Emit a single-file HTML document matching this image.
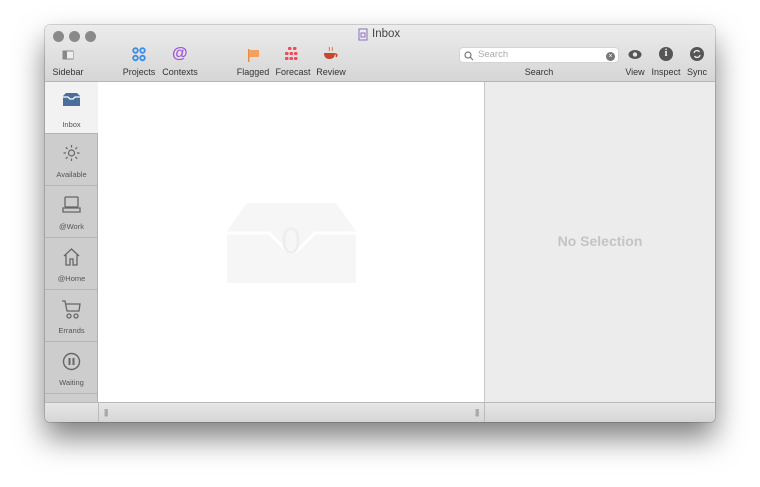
<!DOCTYPE html>
<html><head><meta charset="utf-8"><style>
*{margin:0;padding:0;box-sizing:border-box}
body{width:760px;height:487px;background:#fff;font-family:"Liberation Sans",sans-serif;position:relative;overflow:hidden}
.win{position:absolute;left:45px;top:25px;width:670px;height:397px;border-radius:5px;background:#fff;box-shadow:0 16px 30px rgba(0,0,0,.5),0 0 0 1px rgba(0,0,0,.15);overflow:hidden}
.tb{position:absolute;left:0;top:0;width:670px;height:57px;background:linear-gradient(#ececec,#d6d6d6);border-bottom:1px solid #b4b4b4}
.dot{position:absolute;top:6px;width:11px;height:11px;border-radius:50%;background:#8a8a8a}
.lbl{position:absolute;top:42px;font-size:9px;color:#333;transform:translateX(-50%);white-space:nowrap}
.ic{position:absolute}
.side{position:absolute;left:0;top:57px;width:53px;height:320px;background:#cdcdcd;border-right:1px solid #b0b0b0}
.si{position:absolute;left:0;width:53px;height:52px;border-bottom:1px solid #b5b5b5;text-align:center;font-size:7.5px;color:#555}
.si span{position:absolute;left:0;right:0;top:36px}
.si svg{position:absolute;left:17px;top:10px}
.right{position:absolute;left:439px;top:57px;width:231px;height:320px;background:#ececec;border-left:1px solid #c8c8c8}
.bot{position:absolute;left:0;top:377px;width:670px;height:20px;background:linear-gradient(#e6e6e6,#d6d6d6);border-top:1px solid #b9b9b9}
</style></head><body>
<div class="win">
<div class="tb">
<div class="dot" style="left:8px"></div><div class="dot" style="left:24px"></div><div class="dot" style="left:40px"></div>
<svg class="ic" style="left:313px;top:3px" width="10" height="13"><rect x="1" y="1" width="8" height="11" fill="#eee" stroke="#8a6fc0"/><rect x="3" y="5" width="4" height="4" fill="none" stroke="#8a6fc0"/></svg>
<div style="position:absolute;left:327px;top:3px;font-size:11.5px;color:#444">Inbox</div>
<svg class="ic" style="left:17px;top:25px" width="12" height="10"><rect x="0.5" y="0.5" width="11" height="9" fill="#888"/><rect x="5" y="1.5" width="6" height="7" fill="#eee"/></svg>
<div class="lbl" style="left:23px">Sidebar</div>
<svg class="ic" style="left:87px;top:22px" width="14" height="15" fill="none" stroke="#3a8ee8" stroke-width="1.8"><circle cx="3.5" cy="3.5" r="2.3"/><circle cx="10.5" cy="3.5" r="2.3"/><circle cx="3.5" cy="11" r="2.3"/><circle cx="10.5" cy="11" r="2.3"/></svg>
<div class="lbl" style="left:94px">Projects</div>
<div class="ic" style="left:127px;top:20px;font-size:16px;color:#a050e0;font-weight:bold">@</div>
<div class="lbl" style="left:135px">Contexts</div>
<svg class="ic" style="left:202px;top:24px" width="13" height="13"><rect x="1" y="0" width="1.5" height="13" fill="#f08a40"/><rect x="2" y="1" width="10" height="7" fill="#f4a060"/></svg>
<div class="lbl" style="left:208px">Flagged</div>
<svg class="ic" style="left:240px;top:22px" width="15" height="14" fill="#f04a5a"><rect x="3" y="0" width="3.5" height="3" rx="1"/><rect x="8" y="0" width="3.5" height="3" rx="1"/><rect x="0" y="5" width="3.5" height="3" rx="1"/><rect x="4.5" y="5" width="3.5" height="3" rx="1"/><rect x="9" y="5" width="3.5" height="3" rx="1"/><rect x="0" y="10" width="3.5" height="3" rx="1"/><rect x="4.5" y="10" width="3.5" height="3" rx="1"/><rect x="9" y="10" width="3.5" height="3" rx="1"/></svg>
<div class="lbl" style="left:248px">Forecast</div>
<svg class="ic" style="left:278px;top:21px" width="16" height="15"><path d="M6 1q1 2 0 4M9 1q1 2 0 4" stroke="#e08050" fill="none"/><path d="M1 7h11q0 6-5.5 6T1 7z" fill="#c8462c"/><path d="M12 8q3 0 1 3" stroke="#c8462c" fill="none" stroke-width="1.5"/></svg>
<div class="lbl" style="left:286px">Review</div>
<div style="position:absolute;left:414px;top:22px;width:160px;height:16px;background:#fff;border-radius:4px;border:1px solid #d4d4d4"></div>
<svg class="ic" style="left:419px;top:26px" width="10" height="10" fill="none" stroke="#777" stroke-width="1.2"><circle cx="4" cy="4" r="3"/><path d="M6.2 6.2L9 9"/></svg>
<div style="position:absolute;left:433px;top:24px;font-size:9.5px;color:#aaa">Search</div>
<div style="position:absolute;left:561px;top:27px;width:9px;height:9px;border-radius:50%;background:#777;color:#fff;font-size:7px;line-height:9px;text-align:center">×</div>
<div class="lbl" style="left:494px">Search</div>
<svg class="ic" style="left:583px;top:24px" width="14" height="11"><ellipse cx="7" cy="5.5" rx="6.5" ry="4.5" fill="#555"/><circle cx="7" cy="5.5" r="2.2" fill="#e6e6e6"/></svg>
<div class="lbl" style="left:590px">View</div>
<div class="ic" style="left:614px;top:22px;width:14px;height:14px;border-radius:50%;background:#555;color:#fff;font-size:10px;font-weight:bold;font-family:'Liberation Serif',serif;text-align:center;line-height:14px">i</div>
<div class="lbl" style="left:621px">Inspect</div>
<svg class="ic" style="left:645px;top:22px" width="14" height="14"><circle cx="7" cy="7" r="7" fill="#555"/><path d="M4 6a3 3 0 0 1 5.5-1M10 8a3 3 0 0 1-5.5 1" stroke="#eee" stroke-width="1.3" fill="none"/></svg>
<div class="lbl" style="left:652px">Sync</div>
</div>
<div class="side">
<div class="si" style="top:0;background:#f2f2f2"><svg width="19" height="16"><path d="M1 4l3-3h11l3 3v10H1z" fill="#4a6f9c"/><path d="M1 5h5l2 2h3l2-2h5" fill="none" stroke="#fff" stroke-width="1.3"/></svg><span style="top:38px">Inbox</span></div>
<div class="si" style="top:52px"><svg width="19" height="18" stroke="#666" fill="none" stroke-width="1.2"><circle cx="9.5" cy="9" r="3"/><path d="M9.5 1v2.5M9.5 14.5V17M1.5 9H4M15 9h2.5M3.8 3.3l1.8 1.8M13.4 12.9l1.8 1.8M3.8 14.7l1.8-1.8M13.4 5.1l1.8-1.8"/></svg><span>Available</span></div>
<div class="si" style="top:104px"><svg width="19" height="18" stroke="#666" fill="none" stroke-width="1.3"><rect x="3" y="1" width="13" height="10" rx="1"/><path d="M1 16h17v-4H1zM1 12h17"/></svg><span>@Work</span></div>
<div class="si" style="top:156px"><svg width="19" height="18" stroke="#666" fill="none" stroke-width="1.3"><path d="M2 8L9.5 1 17 8M4 7v10h4v-6h3v6h4V7"/></svg><span>@Home</span></div>
<div class="si" style="top:208px"><svg width="19" height="20" stroke="#666" fill="none" stroke-width="1.3"><path d="M0 1h3l2 10h12l1-7H4"/><circle cx="7" cy="16" r="2"/><circle cx="14" cy="16" r="2"/></svg><span>Errands</span></div>
<div class="si" style="top:260px"><svg width="19" height="19" stroke="#666" fill="none" stroke-width="1.4"><circle cx="9.5" cy="9.5" r="8"/><path d="M7.5 6v7M11.5 6v7" stroke-width="2"/></svg><span>Waiting</span></div>
</div>
<svg style="position:absolute;left:182px;top:176px" width="130" height="82"><path d="M20 2h89l20 28v52H0V30z" fill="#f6f6f6"/><path d="M0 32h42l18 18h10l18-18h41" fill="none" stroke="#fff" stroke-width="3"/><text x="64" y="52" font-size="36" text-anchor="middle" fill="#eeeeee" font-family="Liberation Sans">0</text></svg>
<div class="right"><div style="position:absolute;left:0;right:0;top:151px;text-align:center;font-size:14px;font-weight:bold;color:#c4c4c4">No Selection</div></div>
<div class="bot">
<div style="position:absolute;left:53px;top:0;width:1px;height:19px;background:#bbb"></div>
<div style="position:absolute;left:439px;top:0;width:1px;height:19px;background:#bbb"></div>
<div style="position:absolute;left:59px;top:5px;font-size:8px;color:#888;letter-spacing:-1px">|||</div>
<div style="position:absolute;left:430px;top:5px;font-size:8px;color:#888;letter-spacing:-1px">|||</div>
</div>
</div>
</body></html>
